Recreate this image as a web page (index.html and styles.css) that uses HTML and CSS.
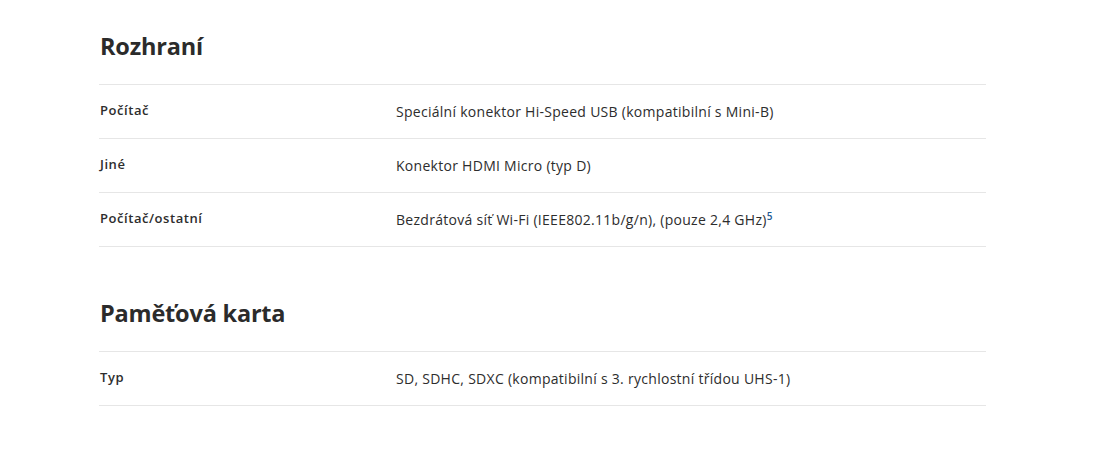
FILE: index.html
```html
<!DOCTYPE html>
<html lang="cs">
<head>
<meta charset="utf-8">
<title>Specifikace</title>
<link rel="stylesheet" href="styles.css">
</head>
<body>
<main class="specs">
  <section class="spec-section">
    <h2 class="spec-title">Rozhraní</h2>
    <div class="spec-table">
      <div class="spec-row">
        <div class="spec-label">Počítač</div>
        <div class="spec-value">Speciální konektor Hi-Speed USB (kompatibilní s Mini-B)</div>
      </div>
      <div class="spec-row">
        <div class="spec-label">Jiné</div>
        <div class="spec-value">Konektor HDMI Micro (typ D)</div>
      </div>
      <div class="spec-row">
        <div class="spec-label">Počítač/ostatní</div>
        <div class="spec-value">Bezdrátová síť Wi-Fi (IEEE802.11b/g/n), (pouze 2,4 GHz)<sup class="note">5</sup></div>
      </div>
    </div>
  </section>
  <section class="spec-section">
    <h2 class="spec-title">Paměťová karta</h2>
    <div class="spec-table">
      <div class="spec-row">
        <div class="spec-label">Typ</div>
        <div class="spec-value">SD, SDHC, SDXC (kompatibilní s 3. rychlostní třídou UHS-1)</div>
      </div>
    </div>
  </section>
</main>
</body>
</html>
```

FILE: styles.css
```css
html, body {
  margin: 0;
  padding: 0;
  background: #ffffff;
}

body {
  font-family: "Open Sans", "DejaVu Sans", sans-serif;
  color: #2d2d2d;
}

.specs {
  width: 887px;
  margin-left: 99px;
  padding-top: 31px;
}

.spec-section + .spec-section {
  margin-top: 51px;
}

.spec-title {
  margin: 0 0 23px 1px;
  font-size: 23.5px;
  line-height: 30px;
  font-weight: 700;
  color: #2b2b2b;
  letter-spacing: -0.2px;
}

.spec-row {
  display: grid;
  grid-template-columns: 297px 1fr;
  align-items: center;
  height: 53px;
  border-top: 1px solid #e6e6e6;
}

.spec-row:last-child {
  border-bottom: 1px solid #e6e6e6;
}

.spec-label {
  padding-left: 1px;
  padding-bottom: 3px;
  font-size: 13px;
  letter-spacing: 0.55px;
  font-weight: 600;
  color: #2d2d2d;
}

.spec-value {
  font-size: 14px;
  letter-spacing: 0.28px;
  color: #2d2d2d;
}

.note {
  font-size: 10px;
  font-weight: 600;
  color: #1d5a94;
  vertical-align: 5px;
  line-height: 0;
  letter-spacing: 0;
}
```
